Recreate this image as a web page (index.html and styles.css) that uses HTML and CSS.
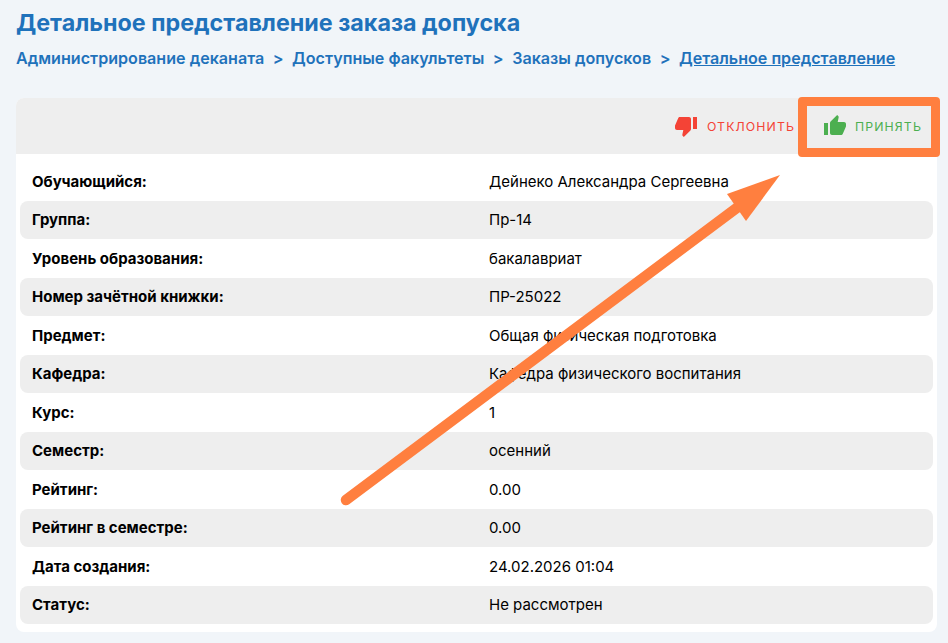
FILE: index.html
```html
<!DOCTYPE html>
<html lang="ru">
<head>
<meta charset="utf-8"/>
<title>Детальное представление заказа допуска</title>
<link rel="stylesheet" href="styles.css">
</head>
<body>
<h1 class="page-title">Детальное представление заказа допуска</h1>
<nav class="crumbs">
  <a>Администрирование деканата</a>
  <span class="sep">&gt;</span>
  <a>Доступные факультеты</a>
  <span class="sep">&gt;</span>
  <a>Заказы допусков</a>
  <span class="sep">&gt;</span>
  <a class="current">Детальное представление</a>
</nav>
<section class="card">
  <div class="card-head">
    <button class="action reject">
      <svg viewBox="0 0 24 24" width="24" height="24"><path fill="#f44336" d="M15 3H6c-.83 0-1.54.5-1.84 1.22l-3.02 7.05c-.09.23-.14.47-.14.73v2c0 1.1.9 2 2 2h6.31l-.95 4.57-.03.32c0 .41.17.79.44 1.06L9.83 23l6.59-6.59c.36-.36.58-.86.58-1.41V5c0-1.1-.9-2-2-2zm4 0v12h4V3h-4z"/></svg>
      Отклонить
    </button>
    <button class="action accept">
      <svg viewBox="0 0 24 24" width="24" height="24"><path fill="#4caf50" d="M1 21h4V9H1v12zm22-11c0-1.1-.9-2-2-2h-6.31l.95-4.57.03-.32c0-.41-.17-.79-.44-1.06L14.17 1 7.58 7.59C7.22 7.95 7 8.45 7 9v10c0 1.1.9 2 2 2h9c.83 0 1.54-.5 1.84-1.22l3.02-7.05c.09-.23.14-.47.14-.73v-2z"/></svg>
      Принять
    </button>
  </div>
  <div class="rows">
    <div class="row"><b>Обучающийся:</b><span>Дейнеко Александра Сергеевна</span></div>
    <div class="row"><b>Группа:</b><span>Пр-14</span></div>
    <div class="row"><b>Уровень образования:</b><span>бакалавриат</span></div>
    <div class="row"><b>Номер зачётной книжки:</b><span>ПР-25022</span></div>
    <div class="row"><b>Предмет:</b><span>Общая физическая подготовка</span></div>
    <div class="row"><b>Кафедра:</b><span>Кафедра физического воспитания</span></div>
    <div class="row"><b>Курс:</b><span>1</span></div>
    <div class="row"><b>Семестр:</b><span>осенний</span></div>
    <div class="row"><b>Рейтинг:</b><span>0.00</span></div>
    <div class="row"><b>Рейтинг в семестре:</b><span>0.00</span></div>
    <div class="row"><b>Дата создания:</b><span>24.02.2026 01:04</span></div>
    <div class="row"><b>Статус:</b><span>Не рассмотрен</span></div>
  </div>
</section>
<!-- annotation drawn over the screenshot -->
<div class="highlight"></div>
<svg class="arrow" viewBox="0 0 948 643" width="948" height="643">
  <line x1="346" y1="500" x2="738" y2="207" stroke="#ff7f3f" stroke-width="10.5" stroke-linecap="round"/>
  <polygon points="780,175 727,194 746,221" fill="#ff7f3f"/>
</svg>
</body>
</html>
```
FILE: styles.css
```css
html, body {
  margin: 0;
  height: 643px;
  overflow: hidden;
}
body {
  position: relative;
  padding: 8px 11px 0 16px;
  box-sizing: border-box;
  background: #f1f5f9;
  font-family: Inter, "Noto Sans", sans-serif;
  color: #000;
}
.page-title {
  margin: 0;
  font-size: 23.3px;
  line-height: 29px;
  font-weight: 700;
  color: #1f72bb;
}
.crumbs {
  display: flex;
  gap: 8.5px;
  margin-top: 12px;
  font-size: 16.1px;
  line-height: 18px;
  font-weight: 600;
  color: #1f72bb;
}
.crumbs .current {
  text-decoration: underline;
}
.card {
  margin-top: 31px;
  background: #fff;
  border-radius: 8px;
  overflow: hidden;
}
.card-head {
  display: flex;
  justify-content: flex-end;
  align-items: center;
  height: 56px;
  background: #eeeeee;
}
.action {
  display: flex;
  align-items: center;
  gap: 9px;
  padding: 0 15px 0 8px;
  border: none;
  background: none;
  font-family: inherit;
  font-size: 12.3px;
  letter-spacing: 1.1px;
  text-transform: uppercase;
}
.reject { color: #f44336; padding-right: 19px; }
.accept { color: #4caf50; padding-left: 9px; gap: 8px; }
.rows {
  padding: 8px 4px;
}
.row {
  display: grid;
  grid-template-columns: 458px 1fr;
  align-items: center;
  height: 38.5px;
  padding: 0 12px;
  box-sizing: border-box;
  border-radius: 8px;
  font-size: 15px;
}
.row span {
  margin-left: -1px;
}
.row b {
  font-weight: 700;
}
.row:nth-child(even) {
  background: #eeeeee;
}
.highlight {
  position: absolute;
  left: 798px;
  top: 97px;
  width: 124px;
  height: 42px;
  border: 9px solid #ff7f3f;
  border-radius: 4px;
}
.arrow {
  position: absolute;
  left: 0;
  top: 0;
  pointer-events: none;
}
```
